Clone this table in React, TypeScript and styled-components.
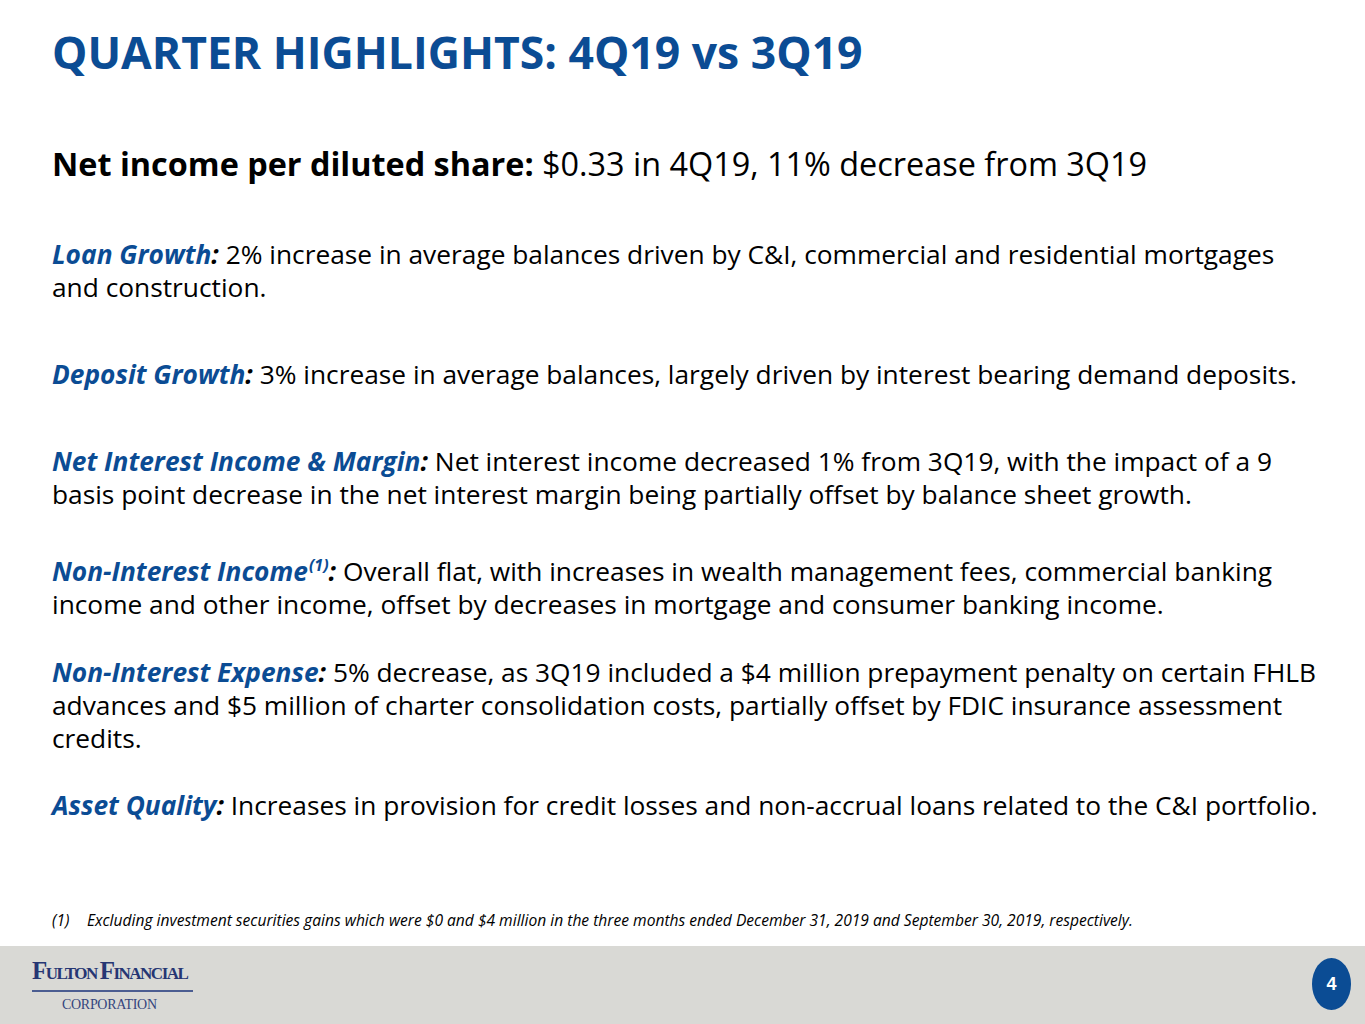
import React from "react";
import styled, { createGlobalStyle } from "styled-components";

const GlobalStyle = createGlobalStyle`
  html, body {
    margin: 0;
    padding: 0;
    background: #ffffff;
  }
  body {
    font-family: "Open Sans", "Noto Sans", sans-serif;
    color: #000000;
  }
`;

const BLUE = "#0b4c94";

const Slide = styled.div`
  width: 1365px;
  height: 1024px;
  display: flex;
  flex-direction: column;
  overflow: hidden;
`;

const Content = styled.div`
  flex: 1;
  padding: 22px 0 0 52px;
  display: flex;
  flex-direction: column;
`;

const Title = styled.h1`
  margin: 0;
  font-size: 44.5px;
  line-height: 60px;
  font-weight: 700;
  color: ${BLUE};
`;

const Headline = styled.div`
  margin-top: 61px;
  font-size: 32.4px;
  line-height: 40px;
  strong {
    font-weight: 700;
  }
`;

const List = styled.div`
  margin-top: 55px;
  display: flex;
  flex-direction: column;
`;

const Item = styled.p<{ $gap: number }>`
  margin: ${(p) => p.$gap}px 0 0;
  font-size: 26.3px;
  line-height: 33px;
  white-space: nowrap;
`;

const Label = styled.span`
  font-style: italic;
  font-weight: 700;
  color: ${BLUE};
`;

const Colon = styled.span`
  color: #000000;
`;

const Sup = styled.sup`
  font-size: 16px;
  line-height: 0;
  vertical-align: 10px;
  margin-left: 1px;
`;

const Footnote = styled.div`
  margin-top: 88px;
  display: flex;
  font-size: 15.6px;
  line-height: 20px;
  font-style: italic;
`;

const FootnoteMark = styled.span`
  width: 35px;
  flex: none;
`;

const Footer = styled.div`
  height: 78px;
  flex: none;
  background: #d9d9d5;
  display: flex;
  align-items: center;
  justify-content: space-between;
  padding: 0 14px 0 32px;
`;

const Logo = styled.div`
  display: flex;
  flex-direction: column;
  align-items: stretch;
  width: 161px;
  font-family: "Liberation Serif", "DejaVu Serif", serif;
  margin-top: 2px;
`;

const LogoName = styled.div`
  font-size: 17px;
  line-height: 24px;
  font-weight: 700;
  color: #263673;
  letter-spacing: -1.5px;
  white-space: nowrap;
`;

const Big = styled.span`
  font-size: 25px;
`;

const LogoRule = styled.div`
  height: 2px;
  background: #4b5d91;
  margin-top: 4px;
`;

const LogoSub = styled.div`
  font-size: 14px;
  line-height: 18px;
  color: #34457d;
  letter-spacing: -0.3px;
  padding-left: 30px;
  margin-top: 4px;
`;

const PageBadge = styled.div`
  width: 39px;
  height: 52px;
  border-radius: 50%;
  background: ${BLUE};
  color: #ffffff;
  font-family: "Liberation Sans", Arial, sans-serif;
  font-weight: 700;
  font-size: 18px;
  display: flex;
  align-items: center;
  justify-content: center;
  margin-top: -2px;
`;

interface Highlight {
  label: React.ReactNode;
  lines: string[];
  gap: number;
}

const highlights: Highlight[] = [
  {
    label: "Loan Growth",
    lines: [
      "2% increase in average balances driven by C&I, commercial and residential mortgages",
      "and construction.",
    ],
    gap: 0,
  },
  {
    label: "Deposit Growth",
    lines: [
      "3% increase in average balances, largely driven by interest bearing demand deposits.",
    ],
    gap: 54,
  },
  {
    label: "Net Interest Income & Margin",
    lines: [
      "Net interest income decreased 1% from 3Q19, with the impact of a 9",
      "basis point decrease in the net interest margin being partially offset by balance sheet growth.",
    ],
    gap: 54,
  },
  {
    label: (
      <>
        Non-Interest Income<Sup>(1)</Sup>
      </>
    ),
    lines: [
      "Overall flat, with increases in wealth management fees, commercial banking",
      "income and other income, offset by decreases in mortgage and consumer banking income.",
    ],
    gap: 44,
  },
  {
    label: "Non-Interest Expense",
    lines: [
      "5% decrease, as 3Q19 included a $4 million prepayment penalty on certain FHLB",
      "advances and $5 million of charter consolidation costs, partially offset by FDIC insurance assessment",
      "credits.",
    ],
    gap: 35,
  },
  {
    label: "Asset Quality",
    lines: [
      "Increases in provision for credit losses and non-accrual loans related to the C&I portfolio.",
    ],
    gap: 34,
  },
];

const App = () => {
  return (
    <>
      <GlobalStyle />
      <Slide>
        <Content>
          <Title>QUARTER HIGHLIGHTS: 4Q19 vs 3Q19</Title>
          <Headline>
            <strong>Net income per diluted share:</strong> $0.33 in 4Q19, 11% decrease from 3Q19
          </Headline>
          <List>
            {highlights.map((h, i) => (
              <Item key={i} $gap={h.gap}>
                <Label>
                  {h.label}
                  <Colon>:</Colon>
                </Label>{" "}
                {h.lines.map((line, j) => (
                  <React.Fragment key={j}>
                    {j > 0 && <br />}
                    {line}
                  </React.Fragment>
                ))}
              </Item>
            ))}
          </List>
          <Footnote>
            <FootnoteMark>(1)</FootnoteMark>
            <span>
              Excluding investment securities gains which were $0 and $4 million in the three months ended
              December 31, 2019 and September 30, 2019, respectively.
            </span>
          </Footnote>
        </Content>
        <Footer>
          <Logo>
            <LogoName>
              <Big>F</Big>ULTON <Big>F</Big>INANCIAL
            </LogoName>
            <LogoRule />
            <LogoSub>CORPORATION</LogoSub>
          </Logo>
          <PageBadge>4</PageBadge>
        </Footer>
      </Slide>
    </>
  );
};

export default App;
